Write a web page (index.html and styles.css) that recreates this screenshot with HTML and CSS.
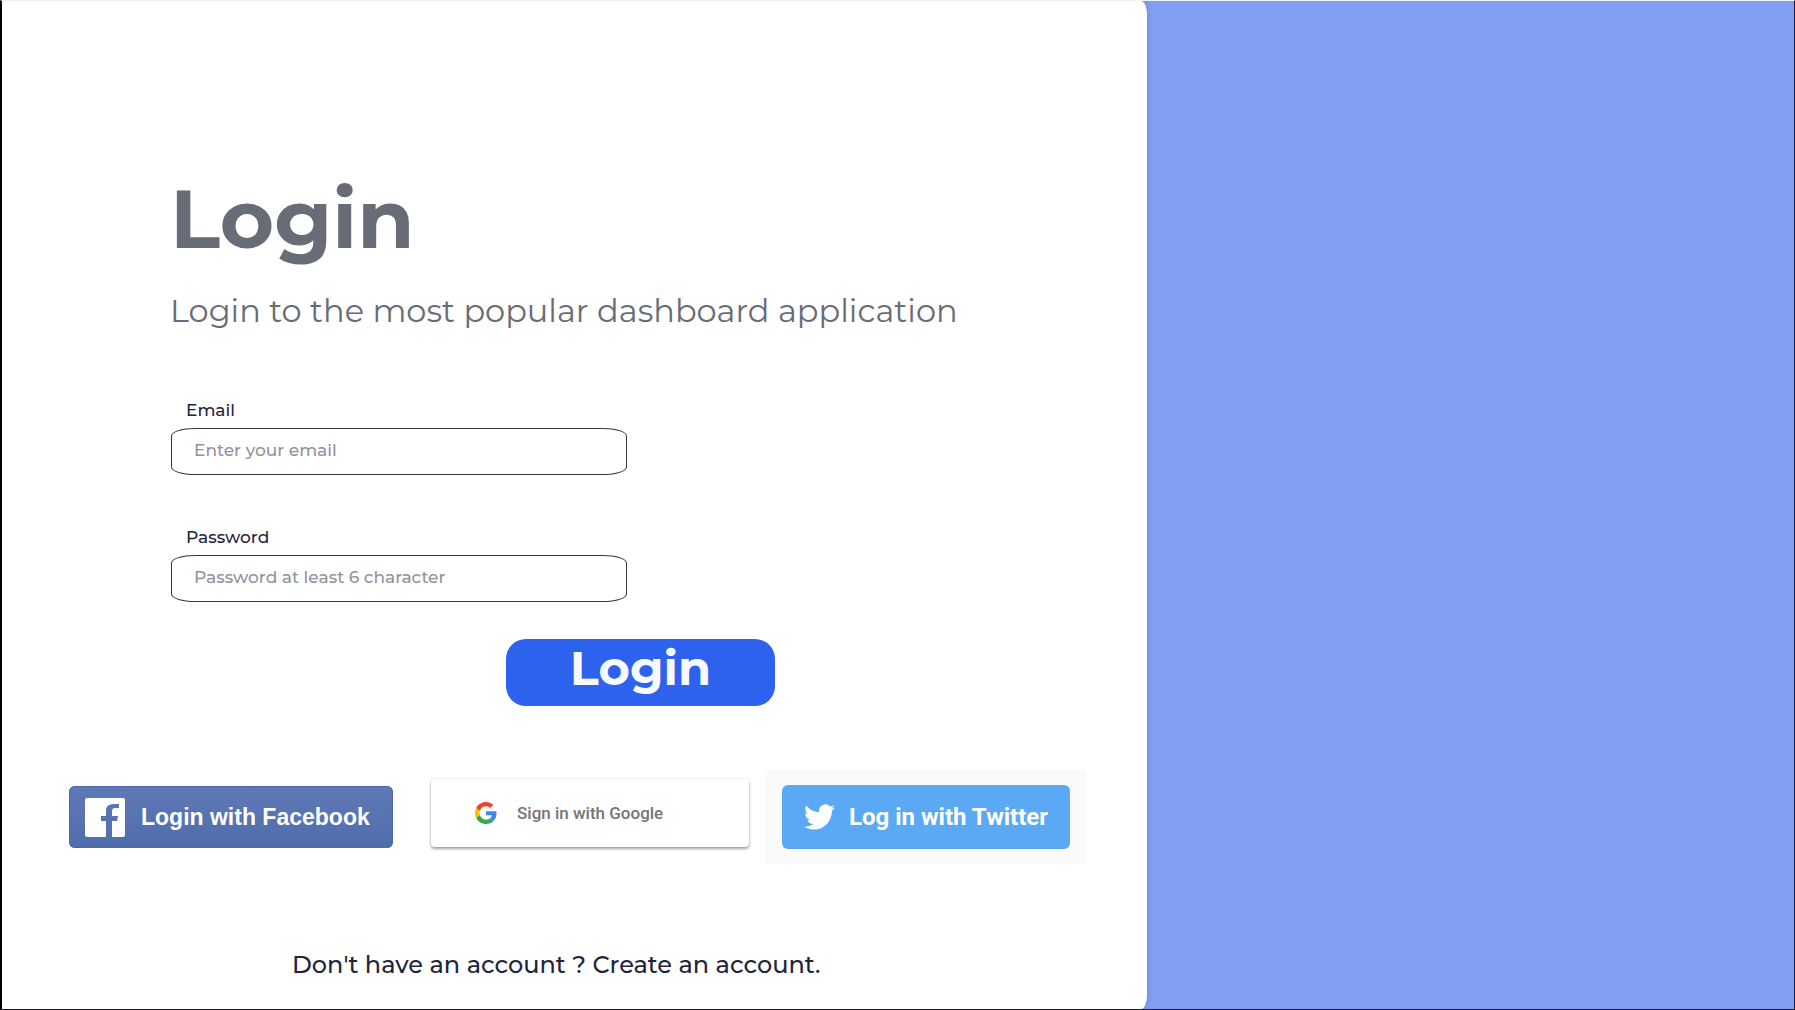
FILE: index.html
```html
<!DOCTYPE html>
<html lang="en">
<head>
<meta charset="utf-8">
<title>Login</title>
<link rel="stylesheet" href="styles.css">
</head>
<body>
<main class="panel">
  <header class="intro">
    <h1 class="title">Login</h1>
    <p class="subtitle">Login to the most popular dashboard application</p>
  </header>
  <form class="form">
    <div class="field">
      <label class="label" for="email">Email</label>
      <input class="input" id="email" type="email" placeholder="Enter your email">
    </div>
    <div class="field">
      <label class="label" for="password">Password</label>
      <input class="input" id="password" type="password" placeholder="Password at least 6 character">
    </div>
    <button class="submit" type="submit">Login</button>
  </form>
  <div class="social">
    <button class="facebook" type="button">
      <svg class="facebook-icon" viewBox="0 0 40 39" aria-hidden="true"><path fill="#fff" d="M2 0h36a2 2 0 0 1 2 2v35a2 2 0 0 1-2 2H27V23h5l1-5h-6v-5c0-2 1-3 3-3h4V6h-5c-6 0-8 3-8 7v5h-5v5h5v16H2a2 2 0 0 1-2-2V2a2 2 0 0 1 2-2z"/></svg>
      <span>Login with Facebook</span>
    </button>
    <button class="google" type="button">
      <svg class="google-icon" viewBox="0 0 48 48" aria-hidden="true">
        <path fill="#EA4335" d="M24 9.5c3.54 0 6.71 1.22 9.21 3.6l6.85-6.85C35.9 2.38 30.47 0 24 0 14.62 0 6.51 5.38 2.56 13.22l7.98 6.19C12.43 13.72 17.74 9.5 24 9.5z"/>
        <path fill="#4285F4" d="M46.98 24.55c0-1.57-.15-3.09-.38-4.55H24v9.02h12.94c-.58 2.96-2.26 5.48-4.78 7.18l7.73 6c4.51-4.18 7.09-10.36 7.09-17.65z"/>
        <path fill="#FBBC05" d="M10.53 28.59c-.48-1.45-.76-2.99-.76-4.59s.27-3.14.76-4.59l-7.98-6.19C.92 16.46 0 20.12 0 24c0 3.88.92 7.54 2.56 10.78l7.97-6.19z"/>
        <path fill="#34A853" d="M24 48c6.48 0 11.93-2.13 15.89-5.81l-7.73-6c-2.15 1.45-4.92 2.3-8.16 2.3-6.26 0-11.57-4.22-13.47-9.91l-7.98 6.19C6.51 42.62 14.62 48 24 48z"/>
      </svg>
      <span>Sign in with Google</span>
    </button>
    <div class="twitter-wrap">
      <button class="twitter" type="button">
        <svg class="twitter-icon" viewBox="0 2 24 20" aria-hidden="true"><path fill="#fff" d="M23.953 4.57a10 10 0 0 1-2.825.775 4.958 4.958 0 0 0 2.163-2.723c-.951.555-2.005.959-3.127 1.184a4.92 4.92 0 0 0-8.384 4.482C7.69 8.095 4.067 6.13 1.64 3.162a4.822 4.822 0 0 0-.666 2.475c0 1.71.87 3.213 2.188 4.096a4.904 4.904 0 0 1-2.228-.616v.06a4.923 4.923 0 0 0 3.946 4.827 4.996 4.996 0 0 1-2.212.085 4.936 4.936 0 0 0 4.604 3.417 9.867 9.867 0 0 1-6.102 2.105c-.39 0-.779-.023-1.17-.067a13.995 13.995 0 0 0 7.557 2.209c9.053 0 13.998-7.496 13.998-13.985 0-.21 0-.42-.015-.63A9.935 9.935 0 0 0 24 4.59z"/></svg>
        <span>Log in with Twitter</span>
      </button>
    </div>
  </div>
  <p class="signup">Don't have an account ? <a class="signup-link" href="#">Create an account.</a></p>
</main>
</body>
</html>
```
FILE: styles.css
```css
* { box-sizing: border-box; }

body {
  display: flex;
  min-height: 100vh;
  margin: 0;
  background: #819ff3;
  border: 1px solid #1c1d26;
  border-top-color: #f2f2f2;
  border-left: 2px solid #000;
  font-family: Montserrat, Inter, sans-serif;
  color: #1f263b;
}

h1, p { margin: 0; }

button { border: 0; padding: 0; font-family: inherit; cursor: pointer; }

.panel {
  display: flex;
  flex-direction: column;
  width: 63.9%;
  padding: 162px 56px 24px 67px;
  background: #fff;
  border-radius: 0 6px 6px 0 / 0 14px 14px 0;
  box-shadow: 1px 0 5px rgba(60, 80, 150, 0.2);
}

.intro { padding-left: 101px; color: #686c76; }

.title { font-size: 83px; line-height: 112px; font-weight: 700; }

.subtitle { margin-top: 12px; font-size: 32px; line-height: 48px; white-space: nowrap; }

.form {
  display: flex;
  flex-direction: column;
  gap: 48px;
  margin-top: 61px;
  padding-left: 102px;
}

.field { display: flex; flex-direction: column; gap: 3px; }

.label { padding-left: 15px; font-size: 17px; line-height: 29px; font-weight: 500; }

.input {
  width: 456px;
  height: 47px;
  padding: 0 22px 3px;
  border: 1px solid #35363a;
  border-radius: 24px / 8px;
  background: #fff;
  font-family: inherit;
  font-size: 17px;
  font-weight: 500;
  color: #1f263b;
}

.input::placeholder { color: #90939c; opacity: 1; }

.submit {
  width: 269px;
  height: 67px;
  margin: -11px 0 0 335px;
  padding-bottom: 9px;
  border-radius: 20px;
  background: #2c62ed;
  color: #f6faff;
  font-size: 48px;
  line-height: 56px;
  font-weight: 700;
}

.social { display: flex; align-items: center; margin-top: 64px; }

.facebook {
  display: flex;
  align-items: center;
  gap: 16px;
  width: 324px;
  height: 62px;
  padding-left: 16px;
  border-radius: 6px;
  background: linear-gradient(#6079b6, #4f6dac);
  box-shadow: inset 0 0 1px 1px #4a67a8;
  color: #fff;
  font: 700 23px/32px "Liberation Sans", Arial, sans-serif;
}

.facebook-icon { width: 40px; height: 39px; }

.google {
  display: flex;
  align-items: center;
  gap: 20px;
  width: 318px;
  height: 68px;
  margin: 0 16px 8px 38px;
  padding-left: 44px;
  border-radius: 4px;
  background: #fff;
  box-shadow: 0 2px 3px rgba(0, 0, 0, 0.35), 0 0 3px rgba(0, 0, 0, 0.12);
  color: #757575;
  font: 500 17px/24px Roboto, sans-serif;
}

.google-icon { width: 22px; height: 22px; }

.twitter-wrap { padding: 15px 16px 15px 17px; background: #fafafa; }

.twitter {
  display: flex;
  align-items: center;
  gap: 14px;
  width: 288px;
  height: 64px;
  padding-left: 22px;
  border-radius: 6px;
  background: #5ba9f4;
  color: #fff;
  font: 700 24px/32px Roboto, sans-serif;
}

.twitter-icon { width: 31px; height: 26px; }

.signup { margin-top: 85px; padding-left: 223px; font-size: 24px; line-height: 32px; font-weight: 500; }

.signup-link { color: inherit; text-decoration: none; }
```
